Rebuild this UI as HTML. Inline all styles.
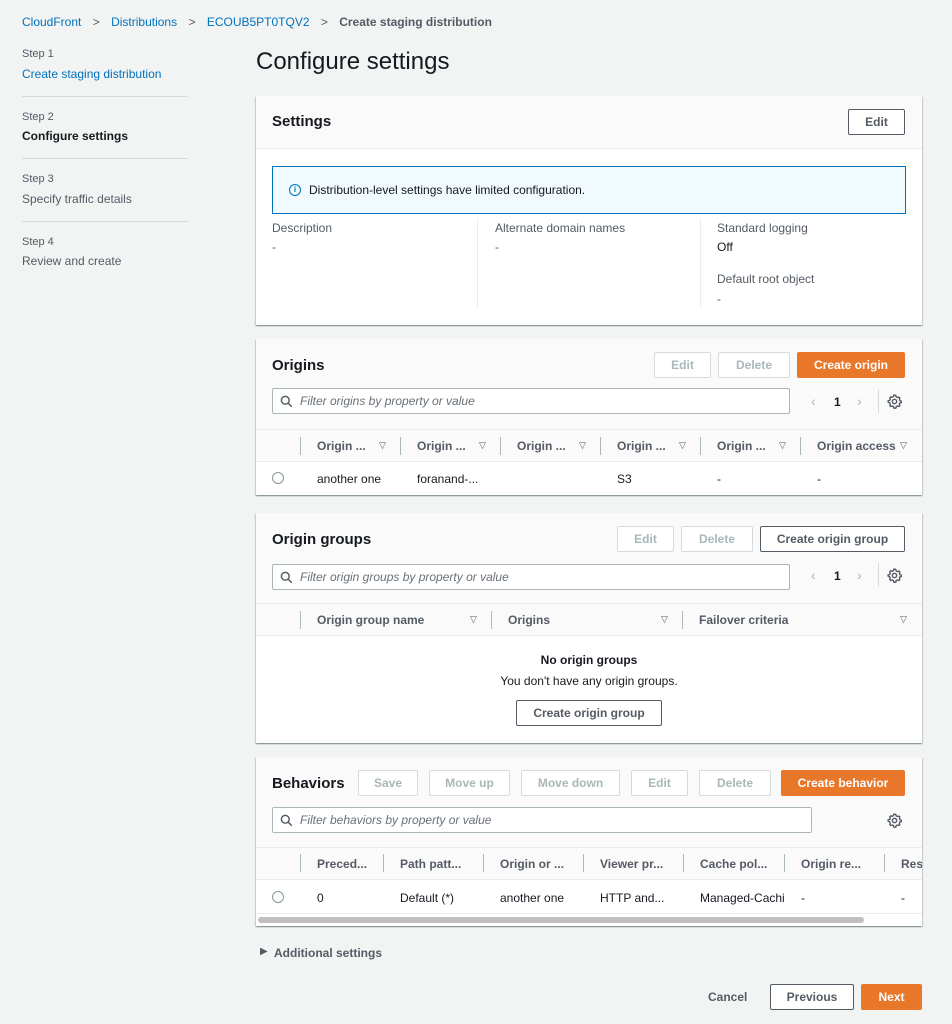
<!DOCTYPE html><html><head><style>
*{box-sizing:border-box;margin:0;padding:0}
body{width:952px;height:1024px;background:#f2f3f3;font-family:"Liberation Sans",sans-serif;font-size:12px;color:#16191f;position:relative;overflow:hidden}
.a{position:absolute;white-space:nowrap}
.lnk{color:#0073bb}
.g{color:#545b64}
.panel{position:absolute;left:256px;width:666px;background:#fff;overflow:hidden;box-shadow:0 1px 1px rgba(0,28,36,.3),1px 1px 1px rgba(0,28,36,.15),-1px 1px 1px rgba(0,28,36,.15)}
.hd{background:#fafafa}
.btn{position:absolute;height:26px;border:1px solid #545b64;border-radius:2px;background:#fff;font-weight:bold;color:#545b64;font-size:12px;display:flex;align-items:center;justify-content:center}
.dis{border-color:#d5dbdb;color:#aab7b8}
.pri{background:#e8772a;border-color:#e8772a;color:#fff}
.inp{position:absolute;height:26px;border:1px solid #aab7b8;border-radius:2px;background:#fff;font-style:italic;color:#687078;padding-left:27px;line-height:24px}
.th{position:absolute;font-weight:bold;color:#545b64}
.sep{position:absolute;width:1px;height:18px;background:#aab7b8}
.tri{position:absolute;font-size:9px;color:#545b64}
</style></head><body>
<svg width="0" height="0" style="position:absolute"><defs>
<symbol id="mag" viewBox="0 0 16 16"><circle cx="6.5" cy="6.5" r="4.8" fill="none" stroke="#545b64" stroke-width="1.8"/><path d="M10 10l4.5 4.5" stroke="#545b64" stroke-width="1.8"/></symbol>
<symbol id="gear" viewBox="0 0 16 16"><path d="M8 1.2l1.4.3.4 1.6 1.3.7 1.6-.5 1 1 -.5 1.6.7 1.3 1.6.4v1.4l-1.6.4-.7 1.3.5 1.6-1 1-1.6-.5-1.3.7-.4 1.6H7.3l-.4-1.6-1.3-.7-1.6.5-1-1 .5-1.6-.7-1.3L1.2 8.7V7.3l1.6-.4.7-1.3-.5-1.6 1-1 1.6.5 1.3-.7.4-1.6z" fill="none" stroke="#545b64" stroke-width="1.5" stroke-linejoin="round"/><circle cx="8" cy="8" r="2.3" fill="none" stroke="#545b64" stroke-width="1.5"/></symbol>
</defs></svg>
<div class="a" style="left:22px;top:15px"><span class="lnk">CloudFront</span> <span class="g" style="margin:0 8px">&gt;</span> <span class="lnk">Distributions</span> <span class="g" style="margin:0 8px">&gt;</span> <span class="lnk">ECOUB5PT0TQV2</span> <span class="g" style="margin:0 8px">&gt;</span> <b class="g">Create staging distribution</b></div>

<div class="a g" style="left:22px;top:48px;font-size:11px">Step 1</div>
<div class="a lnk" style="left:22px;top:67px">Create staging distribution</div>
<div class="a" style="left:22px;top:96px;width:166px;height:1px;background:#d5dbdb"></div>
<div class="a g" style="left:22px;top:111px;font-size:11px">Step 2</div>
<div class="a" style="left:22px;top:129px;font-weight:bold">Configure settings</div>
<div class="a" style="left:22px;top:158px;width:166px;height:1px;background:#d5dbdb"></div>
<div class="a g" style="left:22px;top:173px;font-size:11px">Step 3</div>
<div class="a g" style="left:22px;top:192px">Specify traffic details</div>
<div class="a" style="left:22px;top:221px;width:166px;height:1px;background:#d5dbdb"></div>
<div class="a g" style="left:22px;top:236px;font-size:11px">Step 4</div>
<div class="a g" style="left:22px;top:254px">Review and create</div>

<div class="a" style="left:256px;top:48px;font-size:24px">Configure settings</div>

<!-- Settings -->
<div class="panel" style="top:96px;height:229px">
<div class="hd" style="height:53px;border-bottom:1px solid #eaeded"></div>
<div class="a" style="left:16px;top:17px;font-size:15px;font-weight:bold">Settings</div>
<div class="btn" style="left:592px;top:13px;width:57px">Edit</div>
<div class="a" style="left:16px;top:70px;width:634px;height:48px;background:#f1faff;border:1px solid #0073bb"></div>
<div class="a" style="left:33px;top:88px;width:12px;height:12px;border:1.5px solid #0073bb;border-radius:50%;font-size:8px;font-weight:bold;color:#0073bb;text-align:center;line-height:9px">i</div>
<div class="a" style="left:53px;top:87px">Distribution-level settings have limited configuration.</div>
<div class="a g" style="left:16px;top:125px">Description</div><div class="a g" style="left:16px;top:144px">-</div>
<div class="a" style="left:221px;top:122px;width:1px;height:90px;background:#eaeded"></div>
<div class="a g" style="left:239px;top:125px">Alternate domain names</div><div class="a g" style="left:239px;top:144px">-</div>
<div class="a" style="left:444px;top:122px;width:1px;height:90px;background:#eaeded"></div>
<div class="a g" style="left:461px;top:125px">Standard logging</div><div class="a" style="left:461px;top:144px">Off</div>
<div class="a g" style="left:461px;top:176px">Default root object</div><div class="a g" style="left:461px;top:196px">-</div>
</div>

<!-- Origins -->
<div class="panel" style="top:339px;height:156px">
<div class="hd" style="height:123px;border-bottom:1px solid #eaeded"></div>
<div class="a" style="left:16px;top:18px;font-size:15px;font-weight:bold">Origins</div>
<div class="btn dis" style="left:398px;top:13px;width:57px">Edit</div>
<div class="btn dis" style="left:462px;top:13px;width:72px">Delete</div>
<div class="btn pri" style="left:541px;top:13px;width:108px">Create origin</div>
<div class="inp" style="left:16px;top:49px;width:518px">Filter origins by property or value</div>
<svg class="a" style="left:24px;top:56px" width="13" height="13"><use href="#mag"/></svg>
<div class="a" style="left:555px;top:54px;color:#aab7b8;font-size:14px">&lsaquo;</div>
<div class="a" style="left:578px;top:56px;font-weight:bold">1</div>
<div class="a" style="left:601px;top:54px;color:#aab7b8;font-size:14px">&rsaquo;</div>
<div class="a" style="left:622px;top:50px;width:1px;height:24px;background:#d5dbdb"></div>
<svg class="a" style="left:631px;top:55px" width="15" height="15"><use href="#gear"/></svg>
<div class="a" style="left:0;top:90px;width:666px;height:33px;border-top:1px solid #eaeded"></div>
<div class="sep" style="left:44px;top:98px"></div>
<div class="th" style="left:61px;top:100px">Origin ...</div><div class="tri" style="left:123px;top:101px">&#9661;</div><div class="sep" style="left:144px;top:98px"></div>
<div class="th" style="left:161px;top:100px">Origin ...</div><div class="tri" style="left:223px;top:101px">&#9661;</div><div class="sep" style="left:244px;top:98px"></div>
<div class="th" style="left:261px;top:100px">Origin ...</div><div class="tri" style="left:323px;top:101px">&#9661;</div><div class="sep" style="left:344px;top:98px"></div>
<div class="th" style="left:361px;top:100px">Origin ...</div><div class="tri" style="left:423px;top:101px">&#9661;</div><div class="sep" style="left:444px;top:98px"></div>
<div class="th" style="left:461px;top:100px">Origin ...</div><div class="tri" style="left:523px;top:101px">&#9661;</div><div class="sep" style="left:544px;top:98px"></div>
<div class="th" style="left:561px;top:100px">Origin access</div><div class="tri" style="left:644px;top:101px">&#9661;</div>
<div class="a" style="left:16px;top:133px;width:12px;height:12px;border:1px solid #879596;border-radius:50%"></div>
<div class="a" style="left:61px;top:133px">another one</div>
<div class="a" style="left:161px;top:133px">foranand-...</div>
<div class="a" style="left:361px;top:133px">S3</div>
<div class="a" style="left:461px;top:133px">-</div>
<div class="a" style="left:561px;top:133px">-</div>
</div>

<!-- Origin groups -->
<div class="panel" style="top:513px;height:230px">
<div class="hd" style="height:123px;border-bottom:1px solid #eaeded"></div>
<div class="a" style="left:16px;top:18px;font-size:15px;font-weight:bold">Origin groups</div>
<div class="btn dis" style="left:361px;top:13px;width:57px">Edit</div>
<div class="btn dis" style="left:425px;top:13px;width:72px">Delete</div>
<div class="btn" style="left:504px;top:13px;width:145px">Create origin group</div>
<div class="inp" style="left:16px;top:51px;width:518px">Filter origin groups by property or value</div>
<svg class="a" style="left:24px;top:58px" width="13" height="13"><use href="#mag"/></svg>
<div class="a" style="left:555px;top:54px;color:#aab7b8;font-size:14px">&lsaquo;</div>
<div class="a" style="left:578px;top:56px;font-weight:bold">1</div>
<div class="a" style="left:601px;top:54px;color:#aab7b8;font-size:14px">&rsaquo;</div>
<div class="a" style="left:622px;top:50px;width:1px;height:24px;background:#d5dbdb"></div>
<svg class="a" style="left:631px;top:55px" width="15" height="15"><use href="#gear"/></svg>
<div class="a" style="left:0;top:90px;width:666px;height:1px;background:#eaeded"></div>
<div class="sep" style="left:44px;top:98px"></div>
<div class="th" style="left:61px;top:100px">Origin group name</div><div class="tri" style="left:214px;top:101px">&#9661;</div><div class="sep" style="left:235px;top:98px"></div>
<div class="th" style="left:252px;top:100px">Origins</div><div class="tri" style="left:405px;top:101px">&#9661;</div><div class="sep" style="left:426px;top:98px"></div>
<div class="th" style="left:443px;top:100px">Failover criteria</div><div class="tri" style="left:644px;top:101px">&#9661;</div>
<div class="a" style="left:0;top:140px;width:666px;text-align:center;font-weight:bold">No origin groups</div>
<div class="a" style="left:0;top:161px;width:666px;text-align:center">You don't have any origin groups.</div>
<div class="btn" style="left:260px;top:187px;width:146px">Create origin group</div>
</div>

<!-- Behaviors -->
<div class="panel" style="top:757px;height:169px">
<div class="hd" style="height:123px;border-bottom:1px solid #eaeded"></div>
<div class="a" style="left:16px;top:18px;font-size:15px;font-weight:bold">Behaviors</div>
<div class="btn dis" style="left:102px;top:13px;width:60px">Save</div>
<div class="btn dis" style="left:173px;top:13px;width:81px">Move up</div>
<div class="btn dis" style="left:265px;top:13px;width:99px">Move down</div>
<div class="btn dis" style="left:375px;top:13px;width:57px">Edit</div>
<div class="btn dis" style="left:443px;top:13px;width:72px">Delete</div>
<div class="btn pri" style="left:525px;top:13px;width:124px">Create behavior</div>
<div class="inp" style="left:16px;top:50px;width:540px">Filter behaviors by property or value</div>
<svg class="a" style="left:24px;top:57px" width="13" height="13"><use href="#mag"/></svg>
<svg class="a" style="left:631px;top:56px" width="15" height="15"><use href="#gear"/></svg>
<div class="a" style="left:0;top:90px;width:666px;height:1px;background:#eaeded"></div>
<div class="sep" style="left:44px;top:97px"></div>
<div class="th" style="left:61px;top:100px">Preced...</div><div class="sep" style="left:127px;top:97px"></div>
<div class="th" style="left:144px;top:100px">Path patt...</div><div class="sep" style="left:227px;top:97px"></div>
<div class="th" style="left:244px;top:100px">Origin or ...</div><div class="sep" style="left:327px;top:97px"></div>
<div class="th" style="left:344px;top:100px">Viewer pr...</div><div class="sep" style="left:427px;top:97px"></div>
<div class="th" style="left:444px;top:100px">Cache pol...</div><div class="sep" style="left:528px;top:97px"></div>
<div class="th" style="left:545px;top:100px">Origin re...</div><div class="sep" style="left:628px;top:97px"></div>
<div class="th" style="left:645px;top:100px">Resp</div>
<div class="a" style="left:16px;top:134px;width:12px;height:12px;border:1px solid #879596;border-radius:50%"></div>
<div class="a" style="left:61px;top:134px">0</div>
<div class="a" style="left:144px;top:134px">Default (*)</div>
<div class="a" style="left:244px;top:134px">another one</div>
<div class="a" style="left:344px;top:134px">HTTP and...</div>
<div class="a" style="left:444px;top:134px;width:84px;overflow:hidden">Managed-Caching</div>
<div class="a" style="left:545px;top:134px">-</div>
<div class="a" style="left:645px;top:134px">-</div>
<div class="a" style="left:0;top:156px;width:666px;height:1px;background:#eaeded"></div>
<div class="a" style="left:2px;top:160px;width:606px;height:6px;border-radius:3px;background:#bfbfbf"></div>
</div>

<div class="a" style="left:260px;top:946px;font-size:10px;color:#545b64">&#9654;</div>
<div class="a g" style="left:274px;top:946px;font-weight:bold">Additional settings</div>

<div class="a g" style="left:708px;top:990px;font-weight:bold">Cancel</div>
<div class="btn" style="left:770px;top:984px;width:84px;height:26px">Previous</div>
<div class="btn pri" style="left:861px;top:984px;width:61px;height:26px">Next</div>
</body></html>
